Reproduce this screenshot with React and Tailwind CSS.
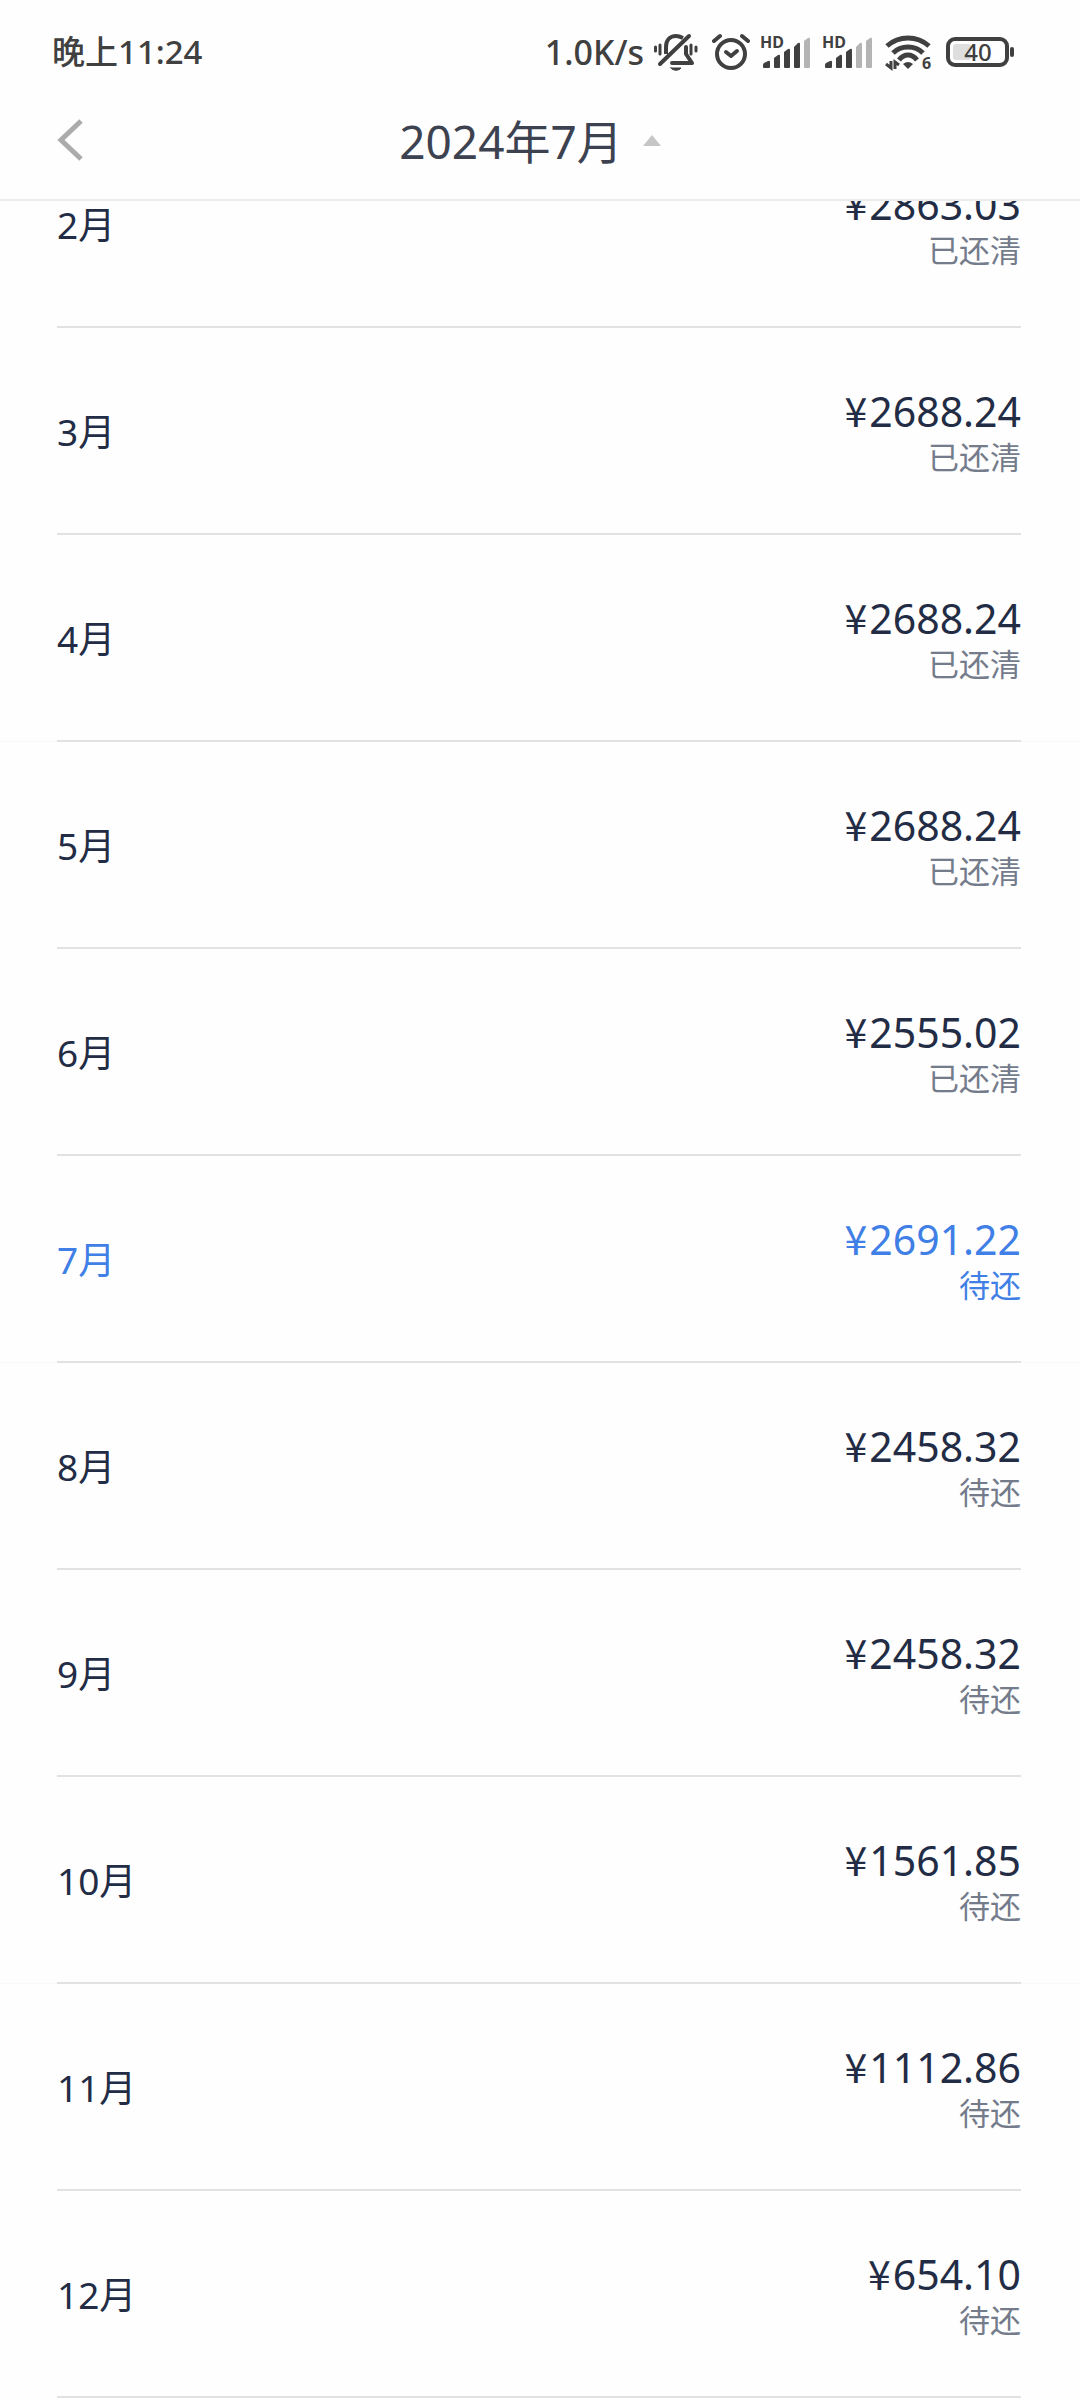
import React from 'react';

const bills = [
  { month: '2月', amount: '2863.03', status: '已还清' },
  { month: '3月', amount: '2688.24', status: '已还清' },
  { month: '4月', amount: '2688.24', status: '已还清', quarterEnd: true },
  { month: '5月', amount: '2688.24', status: '已还清' },
  { month: '6月', amount: '2555.02', status: '已还清' },
  { month: '7月', amount: '2691.22', status: '待还', quarterEnd: true, current: true },
  { month: '8月', amount: '2458.32', status: '待还' },
  { month: '9月', amount: '2458.32', status: '待还' },
  { month: '10月', amount: '1561.85', status: '待还', quarterEnd: true },
  { month: '11月', amount: '1112.86', status: '待还' },
  { month: '12月', amount: '654.10', status: '待还' },
];

const MutedBellIcon = () => (
  <svg width="46" height="40" viewBox="0 0 46 40" fill="none" stroke="#404040" strokeLinecap="round" strokeLinejoin="round">
    <path d="M12 22V15C12 8 16 4 22 4C25 4 27 5 29 6" strokeWidth="4" strokeLinecap="butt" />
    <path d="M32 15V22L38 31H18" strokeWidth="4" />
    <path d="M35 4L6 32" strokeWidth="4" />
    <path d="M17 36H27C25 39 19 39 17 36Z" fill="#404040" strokeWidth="1" />
    <path d="M6 13V22M1.5 15V19M37 13V22M42 15V19" strokeWidth="3" />
  </svg>
);

const AlarmIcon = () => (
  <svg width="40" height="40" viewBox="0 0 40 40" fill="none" stroke="#404040" strokeLinecap="round" strokeLinejoin="round">
    <circle cx="21" cy="22" r="14" strokeWidth="4" />
    <path d="M16 20L21 24L27 19" strokeWidth="4" />
    <path d="M4 9L10 4M38 9L32 4" strokeWidth="4" />
  </svg>
);

const SignalIcon = ({ strength }) => {
  const bars = [
    'M3 35V33Q3 32 4 31L8 29Q10 28 10 30V35Q10 36 9 36H4Q3 36 3 35Z',
    'M14 35V26L18 23Q20 22 20 24V35Q20 36 19 36H15Q14 36 14 35Z',
    'M24 35V20L28 17Q30 16 30 18V35Q30 36 29 36H25Q24 36 24 35Z',
    'M34 35V15L38 11Q40 10 40 12V35Q40 36 39 36H35Q34 36 34 35Z',
    'M44 35V9L48 6Q50 5 50 7V35Q50 36 49 36H45Q44 36 44 35Z',
  ];
  return (
    <svg width="52" height="40" viewBox="0 0 52 40">
      {bars.map((d, i) => (
        <path key={d} d={d} fill={i < strength ? '#404040' : '#b4b4b4'} />
      ))}
      <text x="0" y="16" fontSize="16" fontWeight="700" fill="#404040" fontFamily="Noto Sans, sans-serif">HD</text>
    </svg>
  );
};

const WifiIcon = () => (
  <svg width="52" height="40" viewBox="0 0 52 40" fill="none" stroke="#404040" strokeWidth="5">
    <path d="M3 14Q12 6 24 6Q36 6 45 14" />
    <path d="M9 21Q15 15 24 15Q33 15 39 21" />
    <path d="M15 28Q19 23 24 23Q29 23 33 28" />
    <path d="M24 37L19 32Q24 28 29 32Z" fill="#404040" stroke="none" />
    <path d="M7 29V36L2 32M11 37V30L15 33" strokeWidth="3" />
    <text x="38" y="37" fontSize="16" fontWeight="700" fill="#404040" stroke="none" fontFamily="Noto Sans, sans-serif">6</text>
  </svg>
);

const BatteryIcon = () => (
  <svg width="70" height="40" viewBox="0 0 70 40">
    <rect x="2" y="7" width="59" height="26" rx="7" fill="none" stroke="#404040" strokeWidth="4" />
    <rect x="7" y="12" width="18" height="16" rx="3" fill="#dedede" />
    <rect x="64" y="15" width="4" height="10" rx="2" fill="#404040" />
    <text x="32" y="29" textAnchor="middle" fontSize="24" fontWeight="500" fill="#404040" fontFamily="Noto Sans, sans-serif">40</text>
  </svg>
);

function StatusBar() {
  return (
    <div className="flex h-21 items-center justify-between pt-5 pr-16 pl-13 font-medium text-[#404040]">
      <span className="text-[33px]">晚上11:24</span>
      <div className="flex items-center gap-2.5">
        <span className="text-[34px]">1.0K/s</span>
        <MutedBellIcon />
        <AlarmIcon />
        <SignalIcon strength={4} />
        <SignalIcon strength={3} />
        <WifiIcon />
        <BatteryIcon />
      </div>
    </div>
  );
}

function TitleBar() {
  return (
    <div className="grid h-[117px] grid-cols-[1fr_auto_1fr] items-center border-b-2 border-[#ebebeb] pr-19 pb-0.5 pl-14">
      <button type="button" aria-label="返回" className="justify-self-start">
        <svg width="28" height="44" viewBox="0 0 28 44" fill="none" stroke="#ababab" strokeWidth="5">
          <path d="M25 2L5 21L25 40" />
        </svg>
      </button>
      <button type="button" className="flex items-center gap-5 text-[46px] leading-none text-[#3d4250]">
        2024年7月
        <svg width="18" height="12" viewBox="0 0 18 12" fill="#c6c6c6">
          <path d="M0 11L9 0L18 11Z" />
        </svg>
      </button>
    </div>
  );
}

function BillRow({ bill }) {
  return (
    <li className={bill.quarterEnd ? 'bg-linear-to-t from-[#f8f8f8] from-[1px] to-transparent to-[1px]' : ''}>
      <a
        href="#"
        className={`mr-[59px] ml-[57px] flex h-[207px] items-center justify-between border-b-2 border-[#e2e2e4] pt-0.5 ${
          bill.current ? 'text-[#3f7fe6]' : 'text-[#232c45]'
        }`}
      >
        <span className="text-[37px]">{bill.month}</span>
        <span className="flex flex-col items-end">
          <span className="text-[41px] leading-[48px]">
            <span className="mr-0.5 font-['Noto_Sans_CJK_SC',sans-serif]">¥</span>
            {bill.amount}
          </span>
          <span className={`text-[31px] leading-[44px] ${bill.current ? '' : 'text-[#747b8b]'}`}>{bill.status}</span>
        </span>
      </a>
    </li>
  );
}

export default function App() {
  return (
    <div className="min-h-screen overflow-hidden bg-[#fefefe] font-['Noto_Sans','Noto_Sans_CJK_SC',sans-serif]">
      <header className="relative z-10 bg-[#fefefe]">
        <StatusBar />
        <TitleBar />
      </header>
      {/* list is scrolled partway under the header */}
      <ul className="-mt-20">
        {bills.map((bill) => (
          <BillRow key={bill.month} bill={bill} />
        ))}
      </ul>
    </div>
  );
}
